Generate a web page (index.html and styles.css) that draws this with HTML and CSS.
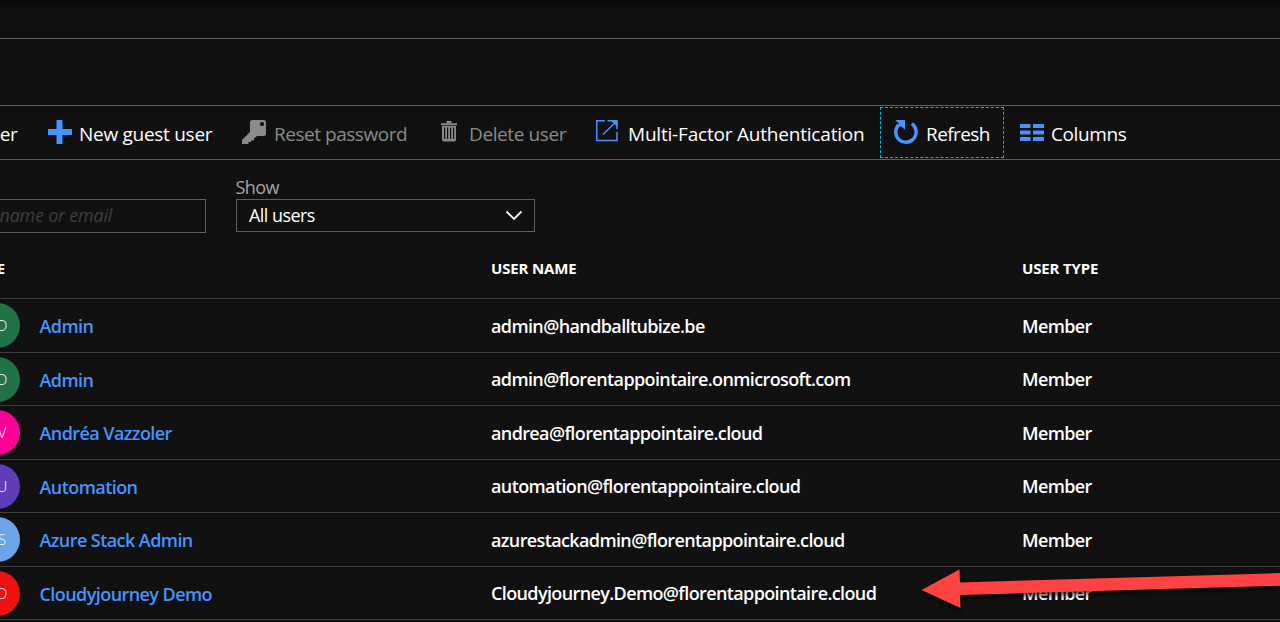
FILE: index.html
```html
<!DOCTYPE html>
<html lang="en">
<head>
<meta charset="utf-8">
<title>Users - All users</title>
<link rel="stylesheet" href="styles.css">
</head>
<body>
<div class="page">
  <header class="topbar"></header>
  <div class="titlebar"></div>
  <nav class="toolbar">
    <div class="tool tool-new"><span class="t">er</span></div>
    <div class="tool tool-guest">
      <svg class="icon" width="24" height="24" viewBox="0 0 24 24"><path d="M8.5 0h6v9H24v6h-9.500v9h-6v-9H0V9h8.500z" fill="#4894fe"/></svg>
      <span class="t">New guest user</span>
    </div>
    <div class="tool tool-reset disabled">
      <svg class="icon" width="24" height="24" viewBox="0 0 24 24"><path fill-rule="evenodd" d="M10.500 0H21.500Q24 0 24 2.500V13.500Q24 16 21.500 16H15L12 18.500V20.500H9V22H6.500V24H0V20L8 12V2.500Q8 0 10.500 0ZM20 2a2.100 2.100 0 1 0 0 4.200a2.100 2.100 0 0 0 0-4.200Z" fill="#8a8a8a"/></svg>
      <span class="t">Reset password</span>
    </div>
    <div class="tool tool-delete disabled">
      <svg class="icon" width="16" height="21" viewBox="0 0 16 21"><path d="M0 3.200H16M5.500 1H10.500" stroke="#8a8a8a" stroke-width="2"/><path fill-rule="evenodd" d="M1 5H15V18.500Q15 20.500 13 20.500H3Q1 20.500 1 18.500ZM3 6.500V18H4.200V6.500ZM6 6.500V18H7.200V6.500ZM9 6.500V18H10.200V6.500ZM12 6.500V18H13.200V6.500Z" fill="#8a8a8a"/></svg>
      <span class="t">Delete user</span>
    </div>
    <div class="tool tool-mfa">
      <svg class="icon" width="22" height="22" viewBox="0 0 22 22" fill="none" stroke="#4894fe" stroke-width="1.500"><path d="M9 .8H.8V20.500H21V12"/><path d="M11.500 .8H21V9M20.800 1L7 14.500"/><path d="M17 1.500H20.500V5Z" fill="#4894fe"/></svg>
      <span class="t">Multi-Factor Authentication</span>
    </div>
    <div class="tool tool-refresh">
      <svg class="icon" width="24" height="26" viewBox="0 0 24 26"><path d="M17.800 4.700A10.200 10.200 0 1 1 4.800 5.800" fill="none" stroke="#4894fe" stroke-width="3.400"/><path d="M1.300 1H11V10.700L7.500 7.500L4.500 7.500L5 4.500Z" fill="#4894fe"/></svg>
      <span class="t">Refresh</span>
    </div>
    <div class="tool tool-columns">
      <svg class="icon" width="24" height="17" viewBox="0 0 24 17"><path d="M0 2H10.500M13 2H24M0 8.500H10.500M13 8.500H24M0 15H10.500M13 15H24" stroke="#4894fe" stroke-width="4"/></svg>
      <span class="t">Columns</span>
    </div>
  </nav>
  <section class="filters">
    <div class="search"><span class="placeholder">name or email</span></div>
    <div class="show">
      <label class="show-label">Show</label>
      <div class="select">
        <span class="select-value">All users</span>
        <svg width="18" height="11" viewBox="0 0 18 11"><path d="M1.500 1.500L9 9L16.500 1.500" fill="none" stroke="#fff" stroke-width="1.900"/></svg>
      </div>
    </div>
  </section>
  <main class="table">
    <div class="head">
      <span class="h-name">E</span><span class="h-user">USER NAME</span><span class="h-type">USER TYPE</span>
    </div>
    <div class="row"><span class="avatar green">AD</span><a class="name">Admin</a><span class="mail">admin@handballtubize.be</span><span class="type">Member</span></div>
    <div class="row"><span class="avatar green">AD</span><a class="name">Admin</a><span class="mail">admin@florentappointaire.onmicrosoft.com</span><span class="type">Member</span></div>
    <div class="row"><span class="avatar pink">AV</span><a class="name">Andréa Vazzoler</a><span class="mail">andrea@florentappointaire.cloud</span><span class="type">Member</span></div>
    <div class="row"><span class="avatar purple">AU</span><a class="name">Automation</a><span class="mail">automation@florentappointaire.cloud</span><span class="type">Member</span></div>
    <div class="row"><span class="avatar blue">AS</span><a class="name">Azure Stack Admin</a><span class="mail">azurestackadmin@florentappointaire.cloud</span><span class="type">Member</span></div>
    <div class="row"><span class="avatar red">CD</span><a class="name">Cloudyjourney Demo</a><span class="mail">Cloudyjourney.Demo@florentappointaire.cloud</span><span class="type">Member</span></div>
  </main>
  <svg class="arrow" width="380" height="62" viewBox="900 560 380 62"><path d="M921.500 590L959.500 569.500L960 582.500L1290 572.800V585.500L960 595L960.500 608Z" fill="#ff4343"/></svg>
</div>
</body>
</html>
```

FILE: styles.css
```css
* { box-sizing: border-box; }
body { margin: 0; background: #111; color: #fff; font-family: "Open Sans", "Noto Sans", sans-serif; }
.page { position: relative; width: 1280px; height: 622px; overflow: hidden; background: #111; }
.topbar { height: 39px; border-bottom: 1px solid #606060; background: linear-gradient(#0a0a0a, #111 12px); }
.titlebar { height: 67px; border-bottom: 1px solid #606060; }

.toolbar { display: flex; height: 54px; border-bottom: 1px solid #606060; font-size: 19px; white-space: nowrap; }
.tool { display: flex; flex: none; align-items: flex-start; height: 53px; }
.tool .t { line-height: 26px; margin-top: 15px; }
.tool .icon { flex: none; margin-top: 14px; }
.disabled { color: #8a8a8a; }
.tool-new { width: 17.500px; margin-right: 30.500px; justify-content: flex-end; letter-spacing: -.3px; }
.tool-guest { width: 194px; gap: 7px; letter-spacing: -.28px; }
.tool-reset { width: 199px; gap: 8px; letter-spacing: -.47px; }
.tool-delete { width: 155px; gap: 12px; letter-spacing: -.4px; }
.tool-delete .icon { margin-top: 15px; }
.tool-mfa { width: 284px; gap: 10px; letter-spacing: -.2px; }
.tool-refresh { width: 124px; height: 51px; margin-top: 1px; padding-left: 13px; gap: 8px; border: 1px dashed #00b7ef; letter-spacing: -.6px; }
.tool-refresh .icon { margin-top: 11px; }
.tool-refresh .t { margin-top: 13px; }
.tool-columns { margin-left: 16px; gap: 7px; letter-spacing: -.4px; }
.tool-columns .icon { margin-top: 18px; }

.filters { display: flex; height: 85px; gap: 30px; font-size: 18px; letter-spacing: -.55px; white-space: nowrap; }
.search { display: flex; justify-content: flex-end; width: 206px; height: 34px; margin-top: 39px; padding-right: 93px; border: 1px solid #606060; border-left: 0; }
.placeholder { font-style: italic; color: #3e3e3e; line-height: 31px; letter-spacing: -.25px; }
.show { width: 299px; padding-top: 16px; }
.show-label { display: block; height: 23px; margin-left: -.5px; line-height: 22px; color: #a5a5a5; }
.select { display: flex; align-items: center; justify-content: space-between; height: 33px; padding: 0 11px 0 12px; border: 1px solid #606060; }
.select-value { line-height: 31px; }

.head, .row { display: grid; grid-template-columns: 491px 531px 1fr; border-bottom: 1px solid #3e3e3e; }
.head { height: 54px; padding-top: 13px; font-size: 15px; line-height: 20px; font-weight: 700; letter-spacing: -.15px; }
.h-name { display: flex; justify-content: flex-end; width: 5px; }
.row { grid-template-columns: 20px 471px 531px 1fr; height: 54px; font-size: 18px; font-weight: 600; line-height: 24px; letter-spacing: -.62px; white-space: nowrap; }
.row:nth-child(odd) { height: 53px; }
.row > .name, .row > .mail, .row > .type { margin-top: 15px; justify-self: start; }
.row:nth-child(odd) > .mail, .row:nth-child(odd) > .type { margin-top: 14px; }
.row > .name { color: #4894fe; margin-left: 19.500px; letter-spacing: -.57px; }
.avatar { display: flex; align-items: center; justify-content: center; width: 45px; height: 45px; margin: 4px 0 0 -25px; padding-bottom: 2px; border-radius: 50%; font-size: 15px; font-weight: 300; letter-spacing: 0; }
.green { background: #217346; }
.pink { background: #ff0097; }
.purple { background: #603cba; }
.blue { background: #6ba5e7; }
.red { background: #ee1111; }
.arrow { position: absolute; left: 900px; top: 560px; filter: drop-shadow(1px 3px 2px rgba(0,0,0,.7)); }
```
